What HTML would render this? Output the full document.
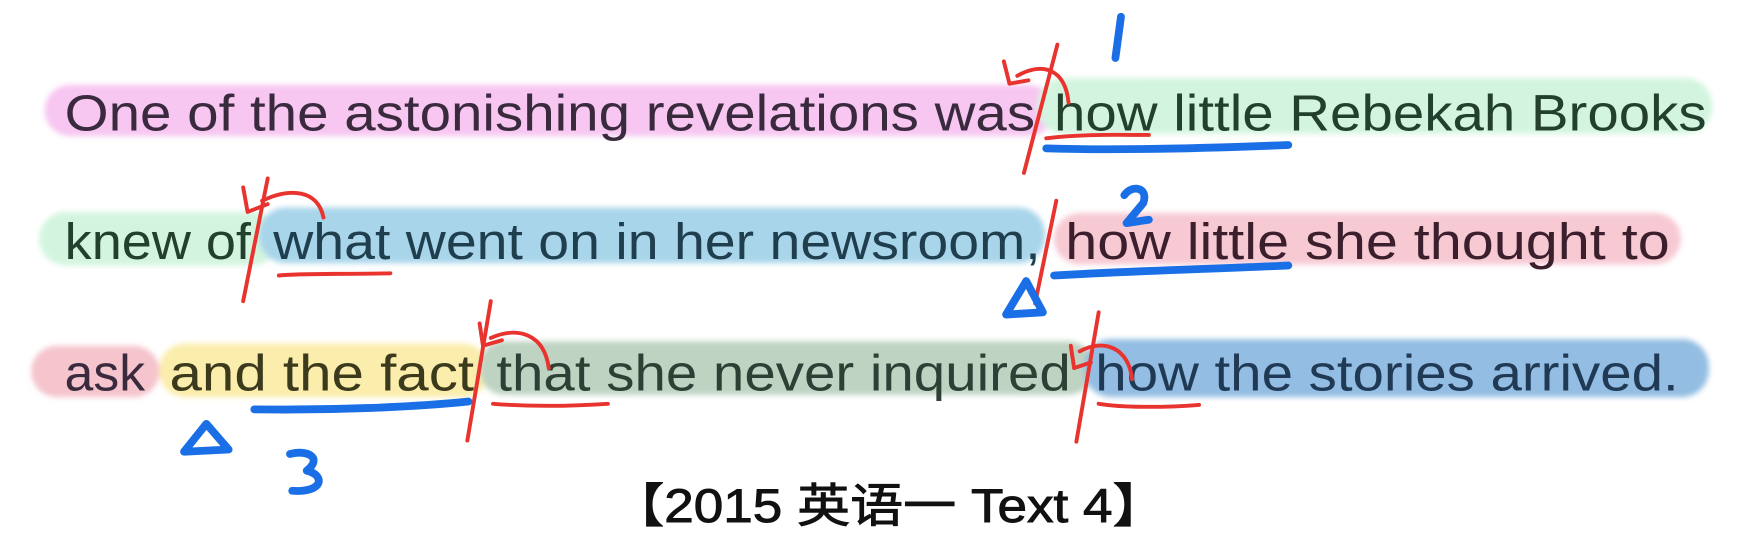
<!DOCTYPE html>
<html><head><meta charset="utf-8">
<style>
html,body{margin:0;padding:0;background:#fff;}
svg{display:block;}
text{font-family:"Liberation Sans","Noto Sans CJK SC",sans-serif;}
</style></head>
<body>
<svg width="1749" height="551" viewBox="0 0 1749 551" xmlns="http://www.w3.org/2000/svg">
<defs><filter id="b" x="-5%" y="-30%" width="110%" height="160%"><feGaussianBlur stdDeviation="2.5"/></filter></defs>
<rect width="1749" height="551" fill="#fff"/>
<g transform="scale(1.1154)">
<g filter="url(#b)">
 <rect x="40" y="76" width="905" height="46" rx="23" fill="#f7c6f1"/>
 <rect x="930" y="70" width="605" height="50" rx="24" fill="#d3f5df"/>
 <rect x="35" y="190" width="215" height="48" rx="24" fill="#d3f5df"/>
 <rect x="232" y="186" width="705" height="50" rx="24" fill="#a9d5ea"/>
 <rect x="945" y="191" width="562" height="46" rx="23" fill="#f7c9d3"/>
 <rect x="28" y="310" width="115" height="46" rx="23" fill="#f5c4cd"/>
 <rect x="143" y="308" width="295" height="48" rx="23" fill="#fbedab"/>
 <rect x="430" y="306" width="550" height="48" rx="22" fill="#bfd3c3"/>
 <rect x="972" y="304" width="560" height="52" rx="24" fill="#93bde2"/>
</g>
<g font-size="46" fill="#3a2a3e">
 <text x="58" y="117" textLength="870" lengthAdjust="spacingAndGlyphs">One of the astonishing revelations was</text>
 <text x="945" y="117" textLength="585" lengthAdjust="spacingAndGlyphs" fill="#23402e">how little Rebekah Brooks</text>
 <text x="58" y="232" textLength="167" lengthAdjust="spacingAndGlyphs" fill="#23402e">knew of</text>
 <text x="245" y="232" textLength="688" lengthAdjust="spacingAndGlyphs" fill="#1f3f4f">what went on in her newsroom,</text>
 <text x="955" y="232" textLength="542" lengthAdjust="spacingAndGlyphs" fill="#3c1f2c">how little she thought to</text>
 <text x="58" y="350" textLength="72" lengthAdjust="spacingAndGlyphs">ask</text>
 <text x="152" y="350" textLength="273" lengthAdjust="spacingAndGlyphs" fill="#3c3a1c">and the fact</text>
 <text x="445" y="350" textLength="515" lengthAdjust="spacingAndGlyphs" fill="#2d4036">that she never inquired</text>
 <text x="982" y="350" textLength="523" lengthAdjust="spacingAndGlyphs" fill="#203a55">how the stories arrived.</text>
 <text x="548" y="468" font-size="42" textLength="497" lengthAdjust="spacingAndGlyphs" fill="#111" stroke="#111" stroke-width="0.8">【2015 英语一 Text 4】</text>
</g>
<g fill="none" stroke="#e8332e" stroke-width="3.5" stroke-linecap="round" stroke-linejoin="round">
 <path d="M918 155 L948 40"/>
 <path d="M958 92 C955 62 935 55 912 68 M900 55 L905 75 L922 72"/>
 <path d="M938 124 C970 120 1000 121 1030 121"/>
 <path d="M218 270 L240 160"/>
 <path d="M290 195 C285 170 260 168 235 180 M218 168 L222 190 L240 183"/>
 <path d="M250 247 C270 245 300 246 350 245"/>
 <path d="M928 272 L947 180"/>
 <path d="M419 395 L440 270"/>
 <path d="M492 330 C488 300 465 292 440 303 M430 290 L433 310 L450 305"/>
 <path d="M442 362 C480 365 515 364 545 362"/>
 <path d="M965 396 L985 280"/>
 <path d="M1015 340 C1012 312 990 303 968 315 M960 310 L963 330 L978 325"/>
 <path d="M985 362 C1010 366 1050 365 1075 363"/>
</g>
<g fill="none" stroke="#1a6fe6" stroke-width="7" stroke-linecap="round" stroke-linejoin="round">
 <path d="M1005 15 L1000 52"/>
 <path d="M938 133 C1000 135 1080 133 1155 130"/>
 <path d="M1008 175 C1015 165 1030 168 1025 182 L1010 200 L1030 197"/>
 <path d="M945 247 C1010 243 1090 241 1155 238"/>
 <path d="M920 252 L902 282 L935 280 Z"/>
 <path d="M228 367 C300 368 370 365 420 360"/>
 <path d="M185 380 L165 405 L205 403 Z"/>
 <path d="M260 407 C275 403 290 410 275 422 C292 426 290 442 262 440"/>
</g>
</g>
</svg>
</body></html>
